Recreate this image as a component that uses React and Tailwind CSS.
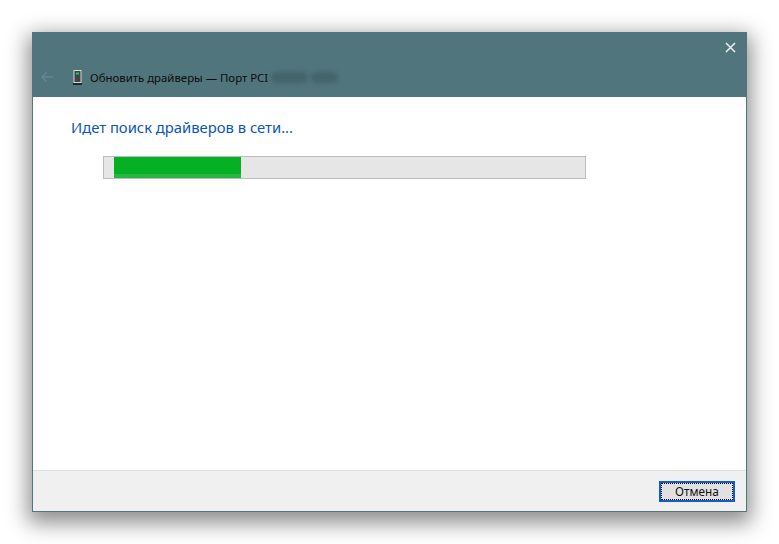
import React from 'react';

function DeviceIcon() {
  return (
    <svg width="9" height="15" viewBox="0 0 9 15" className="shrink-0 block">
      <rect x="0.5" y="0" width="8" height="13" fill="#d4d8d8" />
      <rect x="1.5" y="1" width="6" height="11" fill="#3f4446" />
      <rect x="3" y="2.5" width="3" height="2" fill="#1fd04a" />
      <rect x="0" y="13" width="9" height="2" fill="#20282a" />
    </svg>
  );
}

export default function App() {
  return (
    <div className="w-[779px] h-[544px] bg-white pl-8 pt-8 overflow-hidden" style={{ fontFamily: '"Noto Sans", "Open Sans", sans-serif' }}>
      <div className="w-[715px] h-[480px] flex flex-col border border-[#51757d] border-t-0 bg-white shadow-[0_7px_20px_4px_rgba(0,0,0,0.45)]">
        {/* шапка окна */}
        <div className="h-[65px] bg-[#51757d] -mx-px shrink-0 flex flex-col">
          <div className="h-[30px] flex justify-end items-start pt-[10px] pr-[11px]">
            <svg width="11" height="11" viewBox="0 0 11 11">
              <path d="M1 1l9 9M10 1l-9 9" stroke="#eef2f2" strokeWidth="1.5" />
            </svg>
          </div>
          <div className="flex items-center h-[30px] pl-[8px]">
            <svg width="14" height="12" viewBox="0 0 14 12">
              <path d="M13 6H2M6.5 1.5L2 6l4.5 4.5" fill="none" stroke="#628790" strokeWidth="1.5" />
            </svg>
            <div className="ml-[19px]"><DeviceIcon /></div>
            <span className="ml-[8px] mt-[1px] text-[11.4px] leading-4 text-[#0c0c0c] whitespace-nowrap">Обновить драйверы — Порт PCI</span>
            <div className="ml-[3px] mt-[1px] flex gap-[3px] blur-[2px]">
              <div className="w-[37px] h-[11px] rounded-full bg-[#44636a]" />
              <div className="w-[27px] h-[11px] rounded-full bg-[#44636a]" />
            </div>
          </div>
        </div>

        {/* содержимое */}
        <div className="flex-1 pl-[38px] pt-[20px]">
          <h1 className="text-[14.8px] leading-5 font-normal text-[#0a55b8]">Идет поиск драйверов в сети...</h1>
          <div className="mt-[19px] ml-[32px] w-[483px] h-[23px] border border-[#bcbcbc] bg-[#e6e6e6] pl-[10px]">
            <div className="w-[127px] h-full bg-[#06b025] border-b-[4px] border-[#26b83e]" />
          </div>
        </div>

        {/* нижняя панель */}
        <div className="h-[41px] shrink-0 bg-[#f0f0f0] border-t border-[#dfdfdf] flex justify-end pt-[10px] pr-[11px]">
          <button className="w-[76px] h-[21px] border-2 border-[#0a5fc8] bg-[#e1e1e1] text-[11.8px] leading-none text-[#111] outline-1 outline-dotted -outline-offset-3 outline-black">
            Отмена
          </button>
        </div>
      </div>
    </div>
  );
}
